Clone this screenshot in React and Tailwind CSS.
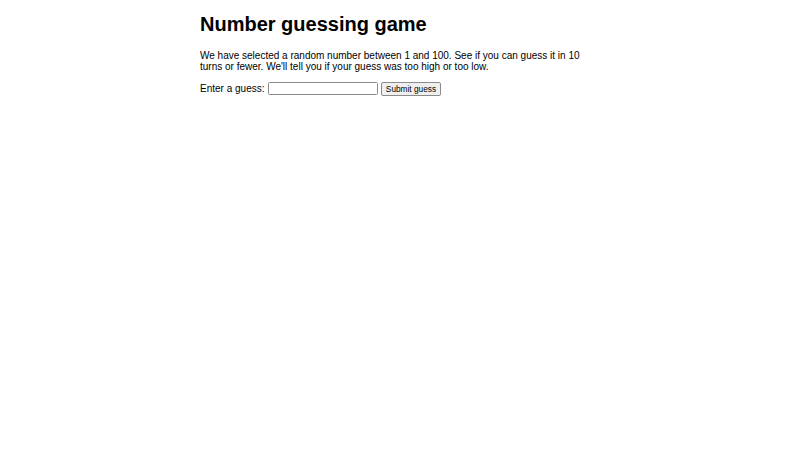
import { useState } from "react"

function GuessForm() {
  const [guess, setGuess] = useState("")

  return (
    <div className="mt-[9px] flex items-center text-[10px]">
      <label htmlFor="guessField" className="leading-[11.5px]">
        Enter a guess:
      </label>
      <input
        id="guessField"
        type="text"
        value={guess}
        onChange={(e) => setGuess(e.target.value)}
        className="ml-[3.5px] box-border h-[13px] w-[110px] rounded-[1.5px] border border-[#8a8a8a] bg-white px-[1px] text-[8.3px] outline-none"
      />
      <button
        type="button"
        className="ml-[3px] box-border h-[14px] w-[60px] rounded-[2px] border border-[#8a8a8a] bg-[#efefef] text-[8.3px] leading-none text-black"
      >
        Submit guess
      </button>
    </div>
  )
}

export default function App() {
  return (
    <div className="min-h-[450px] w-full bg-white font-['Liberation_Sans',Arial,sans-serif] text-black">
      <div className="mx-auto w-[400px] pt-[13.4px]">
        <h1 className="text-[20px] font-bold leading-[23px]">Number guessing game</h1>
        <p className="mt-[13.4px] text-[10px] leading-[11.5px]">
          We have selected a random number between 1 and 100. See if you can guess it in 10 turns or fewer.
          We'll tell you if your guess was too high or too low.
        </p>
        <GuessForm />
      </div>
    </div>
  )
}
